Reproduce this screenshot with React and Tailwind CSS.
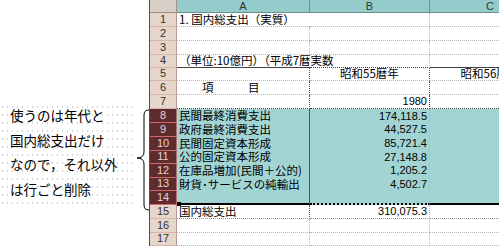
import React from "react";

const JP = "font-['Noto_Sans_CJK_JP','Noto_Sans_CJK_SC',sans-serif]";
const NUM = "font-['Liberation_Sans',Arial,sans-serif]";

function RowHead({ n, sel, cls }) {
  return (
    <div
      className={`w-[27px] shrink-0 flex items-center justify-center border-r border-b text-[11px] leading-none ${NUM} ${
        sel
          ? "bg-[#5e2c2c] text-[#e6d2d2] border-r-[#b07070] border-b-[#d26a6a]"
          : "bg-[#e6d7ca] text-[#333] border-r-[#b09a92] border-b-[#d8b4ac]"
      } ${cls || ""}`}
    >
      {n}
    </div>
  );
}

function CWrap({ children, cls }) {
  return (
    <div className={`w-[69px] shrink-0 overflow-hidden flex ${cls || ""}`}>
      <div className="w-[120px] shrink-0 flex items-center justify-center">{children}</div>
    </div>
  );
}

const dotR = "border-r border-dotted border-r-[#b8b8b8]";
const dotB = "border-b border-dotted border-b-[#b8b8b8]";

export default function App() {
  const selRows = [
    { n: 8, h: "h-[14px]", a: "民間最終消費支出", b: "174,118.5" },
    { n: 9, h: "h-[14px]", a: "政府最終消費支出", b: "44,527.5" },
    { n: 10, h: "h-[14px]", a: "民間固定資本形成", b: "85,721.4" },
    { n: 11, h: "h-[13px]", a: "公的固定資本形成", b: "27,148.8" },
    { n: 12, h: "h-[14px]", a: "在庫品増加(民間＋公的)", b: "1,205.2" },
    { n: 13, h: "h-[14px]", a: "財貨･サービスの純輸出", b: "4,502.7" },
  ];
  const cellA = `w-[133px] shrink-0 flex items-center pl-[2px] text-[11.5px] leading-none whitespace-nowrap ${JP}`;
  const cellB = `w-[120px] shrink-0 flex items-center justify-end pr-[2px] text-[11px] leading-none ${NUM}`;
  return (
    <div className="w-[499px] h-[246px] overflow-hidden bg-white flex text-black">
      {/* left annotation */}
      <div className="w-[149px] shrink-0 flex">
        <div
          className={`w-[135px] mt-[103px] h-[105px] pl-[10px] text-[13.5px] leading-[24.5px] ${JP} bg-[radial-gradient(#d2d2d2_0.8px,transparent_0.9px)] bg-[size:5px_8px]`}
        >
          <div>使うのは年代と</div>
          <div>国内総支出だけ</div>
          <div>なので，それ以外</div>
          <div>は行ごと削除</div>
        </div>
        <svg className="mt-[108px] shrink-0" width="14" height="106" viewBox="0 0 14 106">
          <path
            d="M14,2 Q9,2 9,7 L9,44 Q9,50 2,50 Q9,50 9,56 L9,97 Q9,102 14,102"
            fill="none"
            stroke="#000"
            strokeWidth="1"
          />
        </svg>
      </div>

      {/* sheet */}
      <div className="w-[350px] shrink-0 border-l border-l-[#505050] flex flex-col">
        {/* column header */}
        <div className="flex h-[13px]">
          <div className="w-[27px] shrink-0 bg-[#d8cfc7] border-r border-b border-r-[#a09088] border-b-[#a09088]" />
          <div className={`w-[133px] shrink-0 flex items-center justify-center bg-[#94cccc] border-r border-b border-r-[#6e8e8e] border-b-[#6e8e8e] text-[11px] text-[#333] ${NUM}`}>A</div>
          <div className={`w-[120px] shrink-0 flex items-center justify-center bg-[#94cccc] border-r border-b border-r-[#6e8e8e] border-b-[#6e8e8e] text-[11px] text-[#333] ${NUM}`}>B</div>
          <CWrap cls={`bg-[#94cccc] border-b border-b-[#6e8e8e] text-[11px] text-[#333] ${NUM}`}>C</CWrap>
        </div>

        {/* row 1 */}
        <div className="flex h-[14px]">
          <RowHead n={1} />
          <div className={`${cellA} ${dotB}`}>1. 国内総支出（実質）</div>
          <div className={`${cellB} ${dotR} ${dotB}`} />
          <CWrap cls={dotB} />
        </div>
        {/* row 2 */}
        <div className="flex h-[14px]">
          <RowHead n={2} />
          <div className={`${cellA} ${dotR} ${dotB}`} />
          <div className={`${cellB} ${dotR} ${dotB}`} />
          <CWrap cls={dotB} />
        </div>
        {/* row 3 */}
        <div className="flex h-[14px]">
          <RowHead n={3} />
          <div className={`${cellA} ${dotR} ${dotB}`} />
          <div className={`${cellB} ${dotR} ${dotB}`} />
          <CWrap cls={dotB} />
        </div>
        {/* row 4 */}
        <div className="flex h-[13px]">
          <RowHead n={4} />
          <div className={`${cellA} border-b border-b-[#404040]`}>（単位:10億円）（平成7暦実数</div>
          <div className={`${cellB} ${dotR} border-b border-b-[#404040]`} />
          <CWrap cls="border-b border-b-[#404040]" />
        </div>
        {/* row 5 */}
        <div className="flex h-[14px]">
          <RowHead n={5} />
          <div className={`${cellA} border-r border-r-[#505050] ${dotB}`} />
          <div className={`w-[120px] shrink-0 flex items-center justify-center text-[11.5px] leading-none ${JP} border-r border-r-[#505050] ${dotB}`}>昭和55暦年</div>
          <CWrap cls={`${dotB} text-[11.5px] leading-none ${JP}`}>昭和56暦年</CWrap>
        </div>
        {/* row 6 */}
        <div className="flex h-[14px]">
          <RowHead n={6} />
          <div className={`${cellA} border-r border-r-[#505050] ${dotB}`}>　　項　　　目</div>
          <div className={`${cellB} border-r border-r-[#505050] ${dotB}`} />
          <CWrap cls={dotB} />
        </div>
        {/* row 7 */}
        <div className="flex h-[14px]">
          <RowHead n={7} />
          <div className={`${cellA} border-r border-r-[#505050] border-b border-dotted border-b-[#404040]`} />
          <div className={`${cellB} border-r border-r-[#505050] border-b border-dotted border-b-[#404040]`}>1980</div>
          <CWrap cls="border-b border-dotted border-b-[#404040]" />
        </div>
        {/* selected rows 8-13 */}
        {selRows.map((r) => (
          <div key={r.n} className={`flex ${r.h}`}>
            <RowHead n={r.n} sel />
            <div className={`${cellA} bg-[#a2d4d4] border-r border-r-[#3c5c5c]`}>{r.a}</div>
            <div className={`${cellB} bg-[#a2d4d4] ${dotR}`}>{r.b}</div>
            <CWrap cls="bg-[#a2d4d4]" />
          </div>
        ))}
        {/* row 14 */}
        <div className="flex h-[14px]">
          <RowHead n={14} sel cls="border-b-[#d26a6a]" />
          <div className={`${cellA} relative bg-[#a2d4d4] border-r border-r-[#3c5c5c] border-b-2 border-b-black`}>
            <div className="absolute left-0 bottom-[-3px] w-[4px] h-[4px] bg-black" />
          </div>
          <div className={`${cellB} bg-[#a2d4d4] ${dotR} border-b-2 border-b-black`} />
          <CWrap cls="bg-[#a2d4d4] border-b-2 border-b-black" />
        </div>
        {/* row 15 */}
        <div className="flex h-[14px]">
          <RowHead n={15} />
          <div className={`${cellA} border-r border-r-[#505050] border-b border-dotted border-b-[#909090]`}>国内総支出</div>
          <div className={`${cellB} ${dotR} border-b border-dotted border-b-[#909090]`}>310,075.3</div>
          <CWrap cls="border-b border-dotted border-b-[#909090]" />
        </div>
        {/* row 16 */}
        <div className="flex h-[14px]">
          <RowHead n={16} />
          <div className={`${cellA} ${dotR} ${dotB}`} />
          <div className={`${cellB} ${dotR} ${dotB}`} />
          <CWrap cls={dotB} />
        </div>
        {/* row 17 */}
        <div className="flex h-[13px]">
          <RowHead n={17} />
          <div className={`${cellA} ${dotR} ${dotB}`} />
          <div className={`${cellB} ${dotR} ${dotB}`} />
          <CWrap cls={dotB} />
        </div>
      </div>
    </div>
  );
}
